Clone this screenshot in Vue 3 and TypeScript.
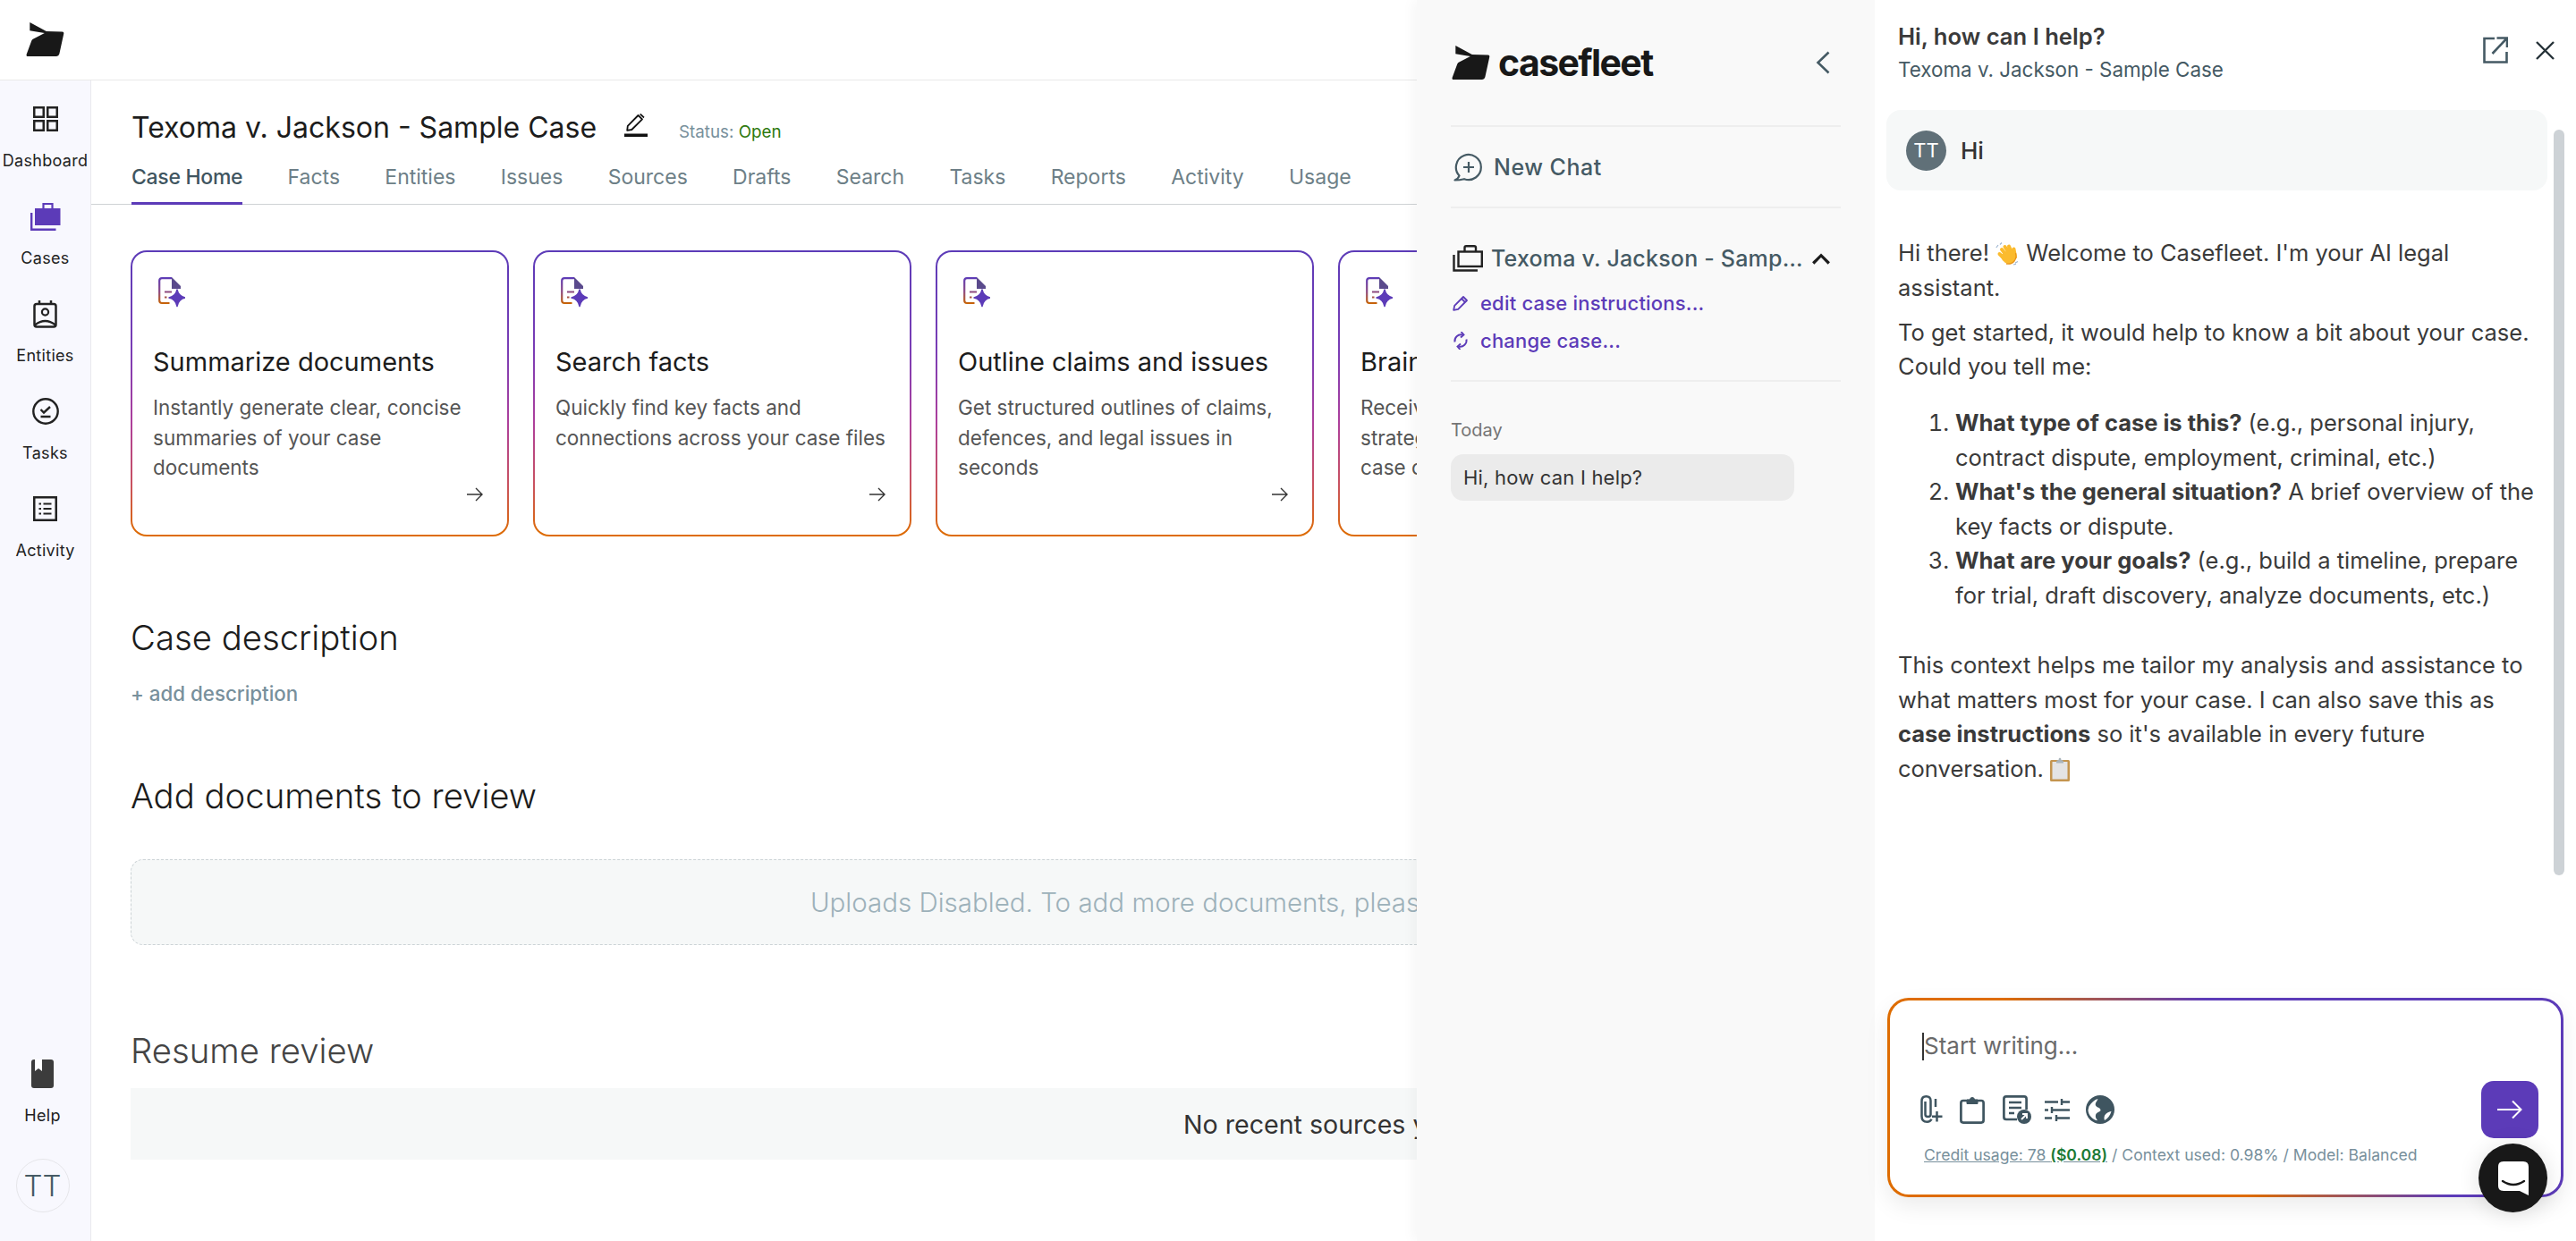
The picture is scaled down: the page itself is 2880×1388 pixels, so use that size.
<script setup lang="ts">
type NavIcon = "dashboard" | "cases" | "entities" | "tasks" | "activity";

const navItems: { label: string; icon: NavIcon }[] = [
  { label: "Dashboard", icon: "dashboard" },
  { label: "Cases", icon: "cases" },
  { label: "Entities", icon: "entities" },
  { label: "Tasks", icon: "tasks" },
  { label: "Activity", icon: "activity" },
];

const tabs = ["Case Home", "Facts", "Entities", "Issues", "Sources", "Drafts", "Search", "Tasks", "Reports", "Activity", "Usage"];

const cards = [
  { title: "Summarize documents", text: "Instantly generate clear, concise summaries of your case documents" },
  { title: "Search facts", text: "Quickly find key facts and connections across your case files" },
  { title: "Outline claims and issues", text: "Get structured outlines of claims, defences, and legal issues in seconds" },
  { title: "Brainstorm strategy", text: "Receive suggestions for litigation strategy and next steps for your case claims and defences" },
];
</script>

<template>
  <div class="app">
    <header class="topbar">
      <svg class="logo-mark logo-mark--top" viewBox="0 0 128 115" aria-hidden="true">
        <path d="M12 0 68 30l54 2q6 0 5 6l-15 69q-2 8-10 8H6q-7 0-5-7l17-46q2-4 6-6l38-20-50-8z" fill="#181818" />
      </svg>
    </header>

    <div class="layout">
      <nav class="sidenav">
        <a v-for="item in navItems" :key="item.label" class="sidenav__item">
          <span class="sidenav__icon">
            <svg v-if="item.icon === 'dashboard'" width="28" height="28" viewBox="0 0 28 28" fill="none" stroke="#222" stroke-width="2.5" aria-hidden="true">
              <rect x="1.25" y="1.25" width="10.5" height="10.5" />
              <rect x="16.25" y="1.25" width="10.5" height="10.5" />
              <rect x="1.25" y="16.25" width="10.5" height="10.5" />
              <rect x="16.25" y="16.25" width="10.5" height="10.5" />
            </svg>
            <svg v-else-if="item.icon === 'cases'" width="34" height="31" viewBox="0 0 34 31" fill="none" aria-hidden="true">
              <rect x="5" y="6" width="28.5" height="19" fill="#5c3bb8" />
              <path d="M14.5 6V1h10v5" stroke="#5c3bb8" stroke-width="2.2" />
              <path d="M1.2 11v18.8h27.3" stroke="#5c3bb8" stroke-width="2.4" />
            </svg>
            <svg v-else-if="item.icon === 'entities'" width="27" height="31" viewBox="0 0 27 31" fill="none" stroke="#222" stroke-width="2.5" aria-hidden="true">
              <rect x="1.5" y="4" width="24" height="25.5" rx="2.5" />
              <path d="M7 0v4M20 0v4" />
              <circle cx="13.5" cy="13" r="3.6" stroke-width="2.2" />
              <path d="M2 27.5q11.5-9 23 0" />
            </svg>
            <svg v-else-if="item.icon === 'tasks'" width="30" height="30" viewBox="0 0 30 30" fill="none" stroke="#222" stroke-width="2.4" aria-hidden="true">
              <circle cx="15" cy="15" r="13.7" />
              <path d="m9.5 13 3.5 3.5 7-6.5M9.5 21h11" />
            </svg>
            <svg v-else width="27" height="28" viewBox="0 0 27 28" fill="none" stroke="#222" stroke-width="2.5" aria-hidden="true">
              <rect x="1.25" y="1.25" width="24.5" height="25.5" />
              <path d="M6.5 8.5H9M11.5 8.5h9M6.5 14H9M11.5 14h9M6.5 19.5H9M11.5 19.5h9" stroke-width="2.2" />
            </svg>
          </span>
          <span class="sidenav__label">{{ item.label }}</span>
        </a>

        <div class="sidenav__bottom">
          <a class="sidenav__item">
            <span class="sidenav__icon">
              <svg width="25" height="32" viewBox="0 0 25 32" aria-hidden="true">
                <rect width="25" height="32" rx="3" fill="#3c3c3c" />
                <path d="M4 0h8v13l-4-3-4 3z" fill="#fff" />
              </svg>
            </span>
            <span class="sidenav__label">Help</span>
          </a>
          <div class="avatar">TT</div>
        </div>
      </nav>

      <main class="main">
        <section class="case-head">
          <div class="case-head__row">
            <h1 class="case-head__title">Texoma v. Jackson - Sample Case</h1>
            <svg class="case-head__edit" width="26" height="26" viewBox="0 0 26 26" fill="none" aria-hidden="true">
              <rect y="22.5" width="26" height="3.5" fill="#111" />
              <path d="m3.2 18.8.6-5L15.500 2 20 6.300 8.300 18z" stroke="#111" stroke-width="1.8" stroke-linejoin="round" />
              <path d="m17 1 1.500-1 4 3.800-1 1.500z" fill="#111" />
            </svg>
            <span class="case-head__status">Status: <em>Open</em></span>
          </div>
          <div class="tabs">
            <a v-for="(tab, i) in tabs" :key="tab" class="tabs__item" :class="{ 'is-active': i === 0 }">{{ tab }}</a>
          </div>
        </section>

        <section class="content">
          <div class="cards">
            <article v-for="card in cards" :key="card.title" class="card">
              <svg class="card__icon" width="30" height="34" viewBox="0 0 30 34" fill="none" aria-hidden="true">
                <defs>
                  <linearGradient id="docGrad" x1="0" y1="0" x2="0" y2="30" gradientUnits="userSpaceOnUse">
                    <stop offset="0" stop-color="#5c3bb8" />
                    <stop offset="0.55" stop-color="#8d4a80" />
                    <stop offset="1" stop-color="#c96400" />
                  </linearGradient>
                </defs>
                <path d="M15 1.2H4Q1.2 1.2 1.2 4v22q0 3 2.800 3h8.500" stroke="url(#docGrad)" stroke-width="2.2" />
                <path d="m15 0 10 10v3H15z" fill="#5a4a8c" />
                <path d="M7 16.5h8M7 22.5h2.500" stroke="url(#docGrad)" stroke-width="2.2" />
                <path d="M21 14q1.500 7.500 9 9-7.500 1.500-9 9.500-1.500-8-9-9.500 7.500-1.500 9-9z" fill="#5c3bb8" stroke="#5c3bb8" stroke-width="1.5" stroke-linejoin="round" />
              </svg>
              <h3 class="card__title">{{ card.title }}</h3>
              <p class="card__text">{{ card.text }}</p>
              <svg class="card__arrow" width="18" height="18" viewBox="0 0 18 18" fill="none" stroke="#333" stroke-width="1.4" aria-hidden="true">
                <path d="M0 9h17M10 2l7 7-7 7" />
              </svg>
            </article>
          </div>

          <h2 class="heading heading--first">Case description</h2>
          <a class="add-link">+ add description</a>

          <h2 class="heading heading--docs">Add documents to review</h2>
          <div class="dropzone">Uploads Disabled. To add more documents, please upgrade your subscription plan.</div>

          <h2 class="heading heading--resume">Resume review</h2>
          <div class="recent">No recent sources yet</div>
        </section>
      </main>
    </div>

    <aside class="panel">
      <div class="threads">
        <div class="threads__brand">
          <svg class="logo-mark logo-mark--panel" viewBox="0 0 128 115" aria-hidden="true">
            <path d="M12 0 68 30l54 2q6 0 5 6l-15 69q-2 8-10 8H6q-7 0-5-7l17-46q2-4 6-6l38-20-50-8z" fill="#181818" />
          </svg>
          <span class="threads__wordmark">casefleet</span>
          <svg class="threads__back" width="16" height="26" viewBox="0 0 16 26" fill="none" stroke="#455a64" stroke-width="2.6" aria-hidden="true">
            <path d="M14.5 1.500 2.500 13l12 11.500" />
          </svg>
        </div>

        <a class="threads__new">
          <svg width="32" height="32" viewBox="0 0 32 32" fill="none" stroke="#455a64" stroke-width="2.2" aria-hidden="true">
            <path d="M6.5 25.500A14 14 0 1 1 12 29.200q-5 1.300-10.500 1.300 4-1.700 5-5z" stroke-linejoin="round" />
            <path d="M17 10v12M11 16h12" />
          </svg>
          New Chat
        </a>

        <div class="threads__case">
          <div class="threads__case-row">
            <svg width="34" height="30" viewBox="0 0 34 30" fill="none" stroke="#222" stroke-width="2.4" aria-hidden="true">
              <rect x="6.5" y="7.5" width="26.3" height="16.5" />
              <path d="M13.500 7V3q0-1.700 1.700-1.700h9Q26 1.300 26 3v4M1.500 11v17.500H28" />
            </svg>
            <span class="threads__case-name">Texoma v. Jackson - Sample Case</span>
            <svg width="20" height="13" viewBox="0 0 20 13" fill="none" stroke="#1c1c1c" stroke-width="3.2" aria-hidden="true">
              <path d="m1.200 11.500 8.800-8.800 8.800 8.800" />
            </svg>
          </div>
          <a class="threads__action threads__action--edit">
            <svg width="18" height="18" viewBox="0 0 18 18" fill="none" stroke="#5c3bb8" stroke-width="1.8" aria-hidden="true">
              <path d="m1.200 16.800 1-5L12 2l4 4-9.800 9.800z" stroke-linejoin="round" />
              <path d="m10 4 4 4" />
            </svg>
            edit case instructions...
          </a>
          <a class="threads__action threads__action--change">
            <svg width="18" height="20" viewBox="0 0 18 20" fill="none" stroke="#5c3bb8" stroke-width="1.9" aria-hidden="true">
              <path d="M2.500 11.500A7 7 0 0 1 11 3.500M15.500 8.500A7 7 0 0 1 7 16.500" />
              <path d="m9.500 0 3 3.500-3.500 3M8.500 20l-3-3.500 3.500-3" />
            </svg>
            change case...
          </a>
        </div>

        <div class="threads__day">Today</div>
        <div class="threads__item">Hi, how can I help?</div>
      </div>

      <div class="chat">
        <header class="chat__head">
          <div>
            <div class="chat__title">Hi, how can I help?</div>
            <div class="chat__case">Texoma v. Jackson - Sample Case</div>
          </div>
          <div class="chat__actions">
            <svg width="28" height="30" viewBox="0 0 28 30" fill="none" stroke="#455a64" stroke-width="2.6" aria-hidden="true">
              <path d="M13 2H1.500v26.500h25V17M10.500 19 27 1.500M15.500 1.500H27V12" />
            </svg>
            <svg width="21" height="21" viewBox="0 0 21 21" fill="none" stroke="#263238" stroke-width="2.4" aria-hidden="true">
              <path d="m1 1 19 19M20 1 1 20" />
            </svg>
          </div>
        </header>

        <div class="user-msg">
          <span class="user-msg__avatar">TT</span>
          <span class="user-msg__text">Hi</span>
        </div>

        <div class="reply">
          <p>
            Hi there!
            <svg class="emoji" width="27" height="27" viewBox="0 0 27 27" aria-hidden="true">
              <path d="M3 4 .8 7M7 1.500 5 3.500M22 24l3-1.500M20 26l3-.8" stroke="#9fb6d2" stroke-width="1.2" fill="none" />
              <g stroke="#fbbb2e" stroke-width="4" stroke-linecap="round" fill="none">
                <path d="m7 9 7 9M10.500 6l6.500 10M15 5.500l4.500 10M20.500 8.500l1.500 9M4.500 14l6 6" />
              </g>
              <path d="M9 13q5-5 13-1 2 7-2 11t-9 1q-4-3-6-8z" fill="#fbbb2e" />
              <path d="M12 25q6 1 9-3t1.500-9" stroke="#e8941a" stroke-width="1.3" fill="none" />
            </svg>
            Welcome to Casefleet. I'm your AI legal assistant.
          </p>
          <p>To get started, it would help to know a bit about your case. Could you tell me:</p>
          <ol>
            <li><strong>What type of case is this?</strong> (e.g., personal injury, contract dispute, employment, criminal, etc.)</li>
            <li><strong>What's the general situation?</strong> A brief overview of the key facts or dispute.</li>
            <li><strong>What are your goals?</strong> (e.g., build a timeline, prepare for trial, draft discovery, analyze documents, etc.)</li>
          </ol>
          <p class="reply__last">
            This context helps me tailor my analysis and assistance to what matters most for your case. I can also save this as
            <strong>case instructions</strong> so it's available in every future conversation.
            <svg class="emoji" width="22" height="27" viewBox="0 0 22 27" aria-hidden="true">
              <rect y="3" width="22" height="24" rx="1.5" fill="#c4954f" />
              <rect x="2.5" y="5" width="17" height="19.5" fill="#e4e4e4" />
              <path d="M7 5q0-2 2.500-2 0-2.500 1.500-2.500T12.500 3Q15 3 15 5v1.500H7z" fill="#a9b4bb" />
            </svg>
          </p>
        </div>

        <span class="scrollbar"></span>

        <form class="composer" @submit.prevent>
          <div class="composer__input"><i class="composer__caret"></i>Start writing...</div>
          <div class="composer__row">
            <svg class="tool" width="25" height="32" viewBox="0 0 25 32" fill="none" stroke="#3f5560" stroke-width="2.5" aria-hidden="true">
              <path d="M11.500 6q0-4.700-5-4.700t-5 5.200v17q0 6.200 6 6.200 3.500 0 5-3M11.500 6v15.500q0 2.500-3 2.500t-3-2.500V7" />
              <path d="M17 4v9M18.500 18v11.500M13 23.700h11.500" />
            </svg>
            <svg class="tool tool--clip" width="28" height="31" viewBox="0 0 28 31" fill="none" stroke="#3f5560" stroke-width="2.7" aria-hidden="true">
              <rect x="1.4" y="5" width="25.2" height="24.6" rx="2.5" />
              <path d="M8 4h3.500a2.500 2.500 0 0 1 5 0H20v4.500H8z" fill="#3f5560" stroke-width="1" />
            </svg>
            <svg class="tool tool--doc" width="32" height="32" viewBox="0 0 32 32" fill="none" stroke="#3f5560" stroke-width="2.7" aria-hidden="true">
              <path d="M16 27H4Q1.400 27 1.400 24.500V4Q1.400 1.400 4 1.400h20q2.600 0 2.600 2.600v12" />
              <path d="M7 8h14M7 14h14M7 20h6" />
              <circle cx="24" cy="24" r="8" fill="#3f5560" stroke="none" />
              <path d="m21 27 6-6M22 21h5v5" stroke="#fff" stroke-width="1.9" />
            </svg>
            <svg class="tool tool--sliders" width="28" height="25" viewBox="0 0 28 25" fill="none" stroke="#3f5560" stroke-width="2.4" aria-hidden="true">
              <path d="M0 3.500h15M19 0v7M19 3.500h9M0 12.500h4M8 9v7M8 12.500h20M0 21.500h8M13 18v7M13 21.500h15" />
            </svg>
            <svg class="tool" width="32" height="32" viewBox="0 0 32 32" aria-hidden="true">
              <circle cx="16" cy="16" r="16" fill="#3f5560" />
              <path d="M3.500 12.500C6 8 10 5 13.500 4c-1 3-3.500 4.500-2.500 7.500 1.500 2.500 5 2 5.500 5 .3 2-4.500 2-5.500 5.500-.7 2.500.8 4.500 2 6.200-6-1.200-10-6-10.500-11.500zM28.500 18c-1.300 4.500-4 8-7.500 10-1-3-.5-6 2.500-8 1.500-1 3-2 5-2z" fill="#fff" />
            </svg>
            <button class="composer__send" type="submit" aria-label="Send">
              <svg width="28" height="22" viewBox="0 0 28 22" fill="none" stroke="#fff" stroke-width="2" aria-hidden="true">
                <path d="M0 11h26M17 1.500 26.500 11 17 20.500" />
              </svg>
            </button>
          </div>
          <div class="composer__meta">
            <u>Credit usage: 78 <b>($0.08)</b></u> / Context used: 0.98% / Model: Balanced
          </div>
        </form>

        <button class="launcher" type="button" aria-label="Open messenger">
          <svg width="34" height="38" viewBox="0 0 34 38" aria-hidden="true">
            <path d="M6 0h22q6 0 6 6v32l-10-5H6q-6 0-6-6V6q0-6 6-6z" fill="#fff" />
            <path d="M5 22q12 8 24 0" fill="none" stroke="#181818" stroke-width="2.4" stroke-linecap="round" />
          </svg>
        </button>
      </div>
    </aside>
  </div>
</template>

<style scoped>
.app {
  position: relative;
  width: 2880px;
  height: 1388px;
  overflow: hidden;
  background: #fff;
  font-family: Inter, "Liberation Sans", sans-serif;
  color: #1c1c1c;
}

.topbar {
  display: flex;
  align-items: center;
  height: 90px;
  box-sizing: border-box;
  padding-left: 29px;
  border-bottom: 1px solid #e9e9e9;
}

.logo-mark {
  display: block;
}

.logo-mark--top {
  width: 43px;
  height: 38px;
  margin-top: -1px;
}

.layout {
  display: flex;
  height: 1298px;
}

.sidenav {
  display: flex;
  flex-direction: column;
  flex: none;
  gap: 32px;
  width: 102px;
  box-sizing: border-box;
  padding-top: 25px;
  background: #f8f8fe;
  border-right: 1px solid #e9e9ee;
}

.sidenav__item {
  display: flex;
  flex-direction: column;
  align-items: center;
}

.sidenav__icon {
  display: flex;
  align-items: center;
  justify-content: center;
  height: 36px;
}

.sidenav__label {
  margin-top: 17px;
  font-size: 18px;
  line-height: 24px;
  letter-spacing: 0.3px;
  color: #222;
}

.sidenav__bottom {
  display: flex;
  flex-direction: column;
  align-items: center;
  margin-top: auto;
  padding-right: 6px;
  padding-bottom: 32px;
}

.avatar {
  display: flex;
  align-items: center;
  justify-content: center;
  width: 60px;
  height: 60px;
  margin-top: 36px;
  box-sizing: border-box;
  border: 1px solid #e6e6ea;
  border-radius: 50%;
  font-size: 33px;
  font-weight: 300;
  color: #455a64;
}

.main {
  flex: 1;
  min-width: 0;
  overflow: hidden;
}

.case-head {
  height: 139px;
  box-sizing: border-box;
  padding: 35px 0 0 45px;
  border-bottom: 1px solid #cfd2d4;
}

.case-head__row {
  display: flex;
  align-items: center;
  height: 36px;
}

.case-head__title {
  margin: 0;
  font-size: 32px;
  font-weight: 400;
  line-height: 36px;
  color: #1c1c1c;
}

.case-head__edit {
  margin: -6px 0 0 31px;
}

.case-head__status {
  margin: 8px 0 0 35px;
  font-size: 18.8px;
  color: #78909c;
}

.case-head__status em {
  font-style: normal;
  color: #2f7a0f;
}

.tabs {
  display: flex;
  gap: 50.3px;
  margin-top: 22px;
}

.tabs__item {
  padding-bottom: 13px;
  font-size: 23px;
  line-height: 30px;
  color: #6d7f87;
}

.tabs__item.is-active {
  color: #3f5560;
  font-weight: 500;
  letter-spacing: -0.3px;
  border-bottom: 3px solid #5c3bb8;
}

.content {
  padding: 51px 82px 0 44px;
}

.cards {
  display: flex;
  gap: 27px;
}

.card {
  display: flex;
  flex: none;
  flex-direction: column;
  width: 423px;
  height: 320px;
  box-sizing: border-box;
  padding: 28px 22px 36px 23px;
  border: 2.5px solid transparent;
  border-radius: 18px;
  background:
    linear-gradient(#fff, #fff) padding-box,
    linear-gradient(180deg, #5c3bb8 0%, #7a3db5 35%, #ad3f9c 60%, #c9525f 82%, #de6c00 100%) border-box;
}

.card__icon {
  flex: none;
  margin-left: 6px;
}

.card__title {
  margin: 43px 0 0;
  font-size: 29px;
  font-weight: 400;
  line-height: 36px;
  color: #1c1c1c;
}

.card__text {
  margin: 16px 0 0;
  font-size: 22.5px;
  line-height: 33.5px;
  color: #555;
}

.card__arrow {
  flex: none;
  margin-top: auto;
  margin-right: 5px;
  align-self: flex-end;
}

.heading {
  margin: 0;
  font-size: 38.3px;
  font-weight: 300;
  line-height: 46px;
  color: #1c1c1c;
}

.heading--first {
  margin-top: 90px;
}

.heading--docs {
  margin-top: 76px;
}

.heading--resume {
  margin-top: 95px;
  color: #444;
}

.add-link {
  display: block;
  margin-top: 25px;
  font-size: 22.3px;
  font-weight: 500;
  line-height: 30px;
  color: #78909c;
}

.dropzone {
  display: flex;
  align-items: center;
  justify-content: center;
  height: 96px;
  margin-top: 48px;
  box-sizing: border-box;
  padding-left: 10px;
  border: 1.5px dashed #ccd3d6;
  border-radius: 14px;
  background: #f6f8f8;
  font-size: 29.5px;
  font-weight: 300;
  color: #9db1ba;
  white-space: nowrap;
}

.recent {
  display: flex;
  align-items: center;
  justify-content: center;
  height: 80px;
  margin-top: 19px;
  background: #f6f8f8;
  font-size: 28.6px;
  color: #333;
}

/* chat panel sits over the page */
.panel {
  position: absolute;
  top: 0;
  right: 0;
  bottom: 0;
  display: flex;
  width: 1296px;
  box-shadow: -4px 0 14px rgba(0, 0, 0, 0.04);
}

.threads {
  flex: none;
  width: 512px;
  box-sizing: border-box;
  padding: 0 38px;
  background: #f9f9f9;
}

.threads__brand {
  display: flex;
  align-items: center;
  height: 142px;
  box-sizing: border-box;
  padding-left: 1px;
  border-bottom: 2px solid #eeeeee;
}

.logo-mark--panel {
  width: 43px;
  height: 38px;
}

.threads__wordmark {
  margin-left: 9px;
  font-size: 41px;
  font-weight: 700;
  letter-spacing: -1.6px;
  line-height: 44px;
  color: #181818;
}

.threads__back {
  margin-left: auto;
  margin-right: 12px;
}

.threads__new {
  display: flex;
  align-items: center;
  gap: 13px;
  height: 91px;
  box-sizing: border-box;
  padding-left: 3px;
  border-bottom: 2px solid #eeeeee;
  font-size: 25px;
  font-weight: 500;
  letter-spacing: 0.5px;
  color: #455a64;
}

.threads__case {
  height: 194px;
  box-sizing: border-box;
  padding-top: 40px;
  border-bottom: 2px solid #eeeeee;
}

.threads__case-row {
  display: flex;
  align-items: center;
  height: 32px;
  padding-left: 2px;
  padding-right: 12px;
}

.threads__case-name {
  flex: 1;
  min-width: 0;
  margin: 0 6px 0 9px;
  overflow: hidden;
  white-space: nowrap;
  text-overflow: ellipsis;
  font-size: 25px;
  font-weight: 500;
  letter-spacing: 0.2px;
  color: #455a64;
}

.threads__action {
  display: flex;
  align-items: center;
  gap: 13px;
  height: 30px;
  padding-left: 2px;
  font-size: 22px;
  font-weight: 500;
  letter-spacing: 0.2px;
  color: #5c3bb8;
}

.threads__action--edit {
  margin-top: 19px;
}

.threads__action--change {
  margin-top: 12px;
}

.threads__day {
  margin-top: 42px;
  font-size: 20px;
  line-height: 24px;
  color: #757575;
}

.threads__item {
  width: 384px;
  height: 52px;
  margin-top: 15px;
  box-sizing: border-box;
  padding-left: 14px;
  border-radius: 14px;
  background: #ebebeb;
  font-size: 22px;
  line-height: 52px;
  letter-spacing: 0.2px;
  color: #333;
}

.chat {
  position: relative;
  display: flex;
  flex: 1;
  flex-direction: column;
  min-width: 0;
  background: #fff;
}

.chat__head {
  display: flex;
  justify-content: space-between;
  height: 123px;
  box-sizing: border-box;
  padding: 24px 24px 0 26px;
}

.chat__title {
  font-size: 25.6px;
  font-weight: 600;
  line-height: 34px;
  color: #3a3a3a;
}

.chat__case {
  margin-top: 3px;
  font-size: 22.4px;
  line-height: 34px;
  color: #455a64;
}

.chat__actions {
  display: flex;
  align-items: flex-start;
  gap: 31px;
  padding-top: 17px;
}

.chat__actions svg:last-child {
  margin-top: 5px;
}

.user-msg {
  display: flex;
  align-items: center;
  gap: 16px;
  width: 739px;
  height: 90px;
  margin-left: 13px;
  box-sizing: border-box;
  padding-left: 22px;
  border-radius: 16px;
  background: #f6f8f8;
}

.user-msg__avatar {
  display: flex;
  align-items: center;
  justify-content: center;
  width: 45px;
  height: 45px;
  border-radius: 50%;
  background: #607078;
  font-size: 22px;
  color: #fff;
}

.user-msg__text {
  font-size: 26px;
  font-weight: 500;
  color: #333;
}

.reply {
  width: 723px;
  margin: 51px 0 0 26px;
  font-size: 25.5px;
  line-height: 38.5px;
  color: #3a3a3a;
}

.reply p {
  margin: 0 0 11.5px;
}

.reply ol {
  margin: 24.5px 0 0;
  padding-left: 64px;
}

.reply .reply__last {
  margin-top: 40px;
}

.emoji {
  vertical-align: -5px;
}

.scrollbar {
  position: absolute;
  top: 145px;
  right: 13px;
  width: 12px;
  height: 834px;
  border-radius: 6px;
  background: #cdd2d6;
}

.composer {
  width: 756px;
  height: 223px;
  margin: auto 0 49px 14px;
  box-sizing: border-box;
  padding: 33px 25px 0 38px;
  border: 3px solid transparent;
  border-radius: 24px;
  background:
    linear-gradient(#fff, #fff) padding-box,
    linear-gradient(39deg, #de6c00 39%, #5c3bb8 61%) border-box;
  box-shadow: 0 10px 26px rgba(0, 0, 0, 0.08);
}

.composer__input {
  position: relative;
  font-size: 26px;
  line-height: 36px;
  color: #6a6a6a;
}

.composer__caret {
  position: absolute;
  left: -2px;
  top: 3px;
  width: 2px;
  height: 31px;
  background: #333;
}

.composer__row {
  display: flex;
  align-items: center;
  gap: 18px;
  height: 64px;
  margin-top: 21px;
  margin-left: -4px;
}

.tool--clip {
  margin-left: 1px;
}

.tool--doc {
  margin-left: 2px;
}

.tool--sliders {
  margin-left: -3px;
}

.composer__send {
  display: flex;
  align-items: center;
  justify-content: center;
  width: 64px;
  height: 64px;
  margin-left: auto;
  padding: 0;
  border: 0;
  border-radius: 14px;
  background: #5c3bb8;
}

.composer__meta {
  margin-top: 6px;
  font-size: 17.6px;
  line-height: 26px;
  color: #78909c;
}

.composer__meta b {
  font-weight: 600;
  color: #1b7a35;
}

.launcher {
  position: absolute;
  right: 32px;
  bottom: 32px;
  display: flex;
  align-items: center;
  justify-content: center;
  width: 77px;
  height: 77px;
  padding: 0;
  border: 0;
  border-radius: 50%;
  background: #181818;
  box-shadow: 0 2px 24px rgba(0, 0, 0, 0.12);
}
</style>
